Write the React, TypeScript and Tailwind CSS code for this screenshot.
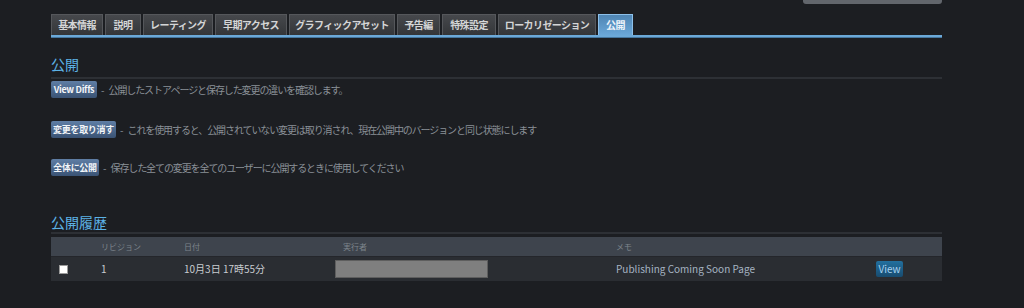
const tabs = [
  { label: "基本情報", w: "w-[52px]" },
  { label: "説明", w: "w-[36px]" },
  { label: "レーティング", w: "w-[70px]" },
  { label: "早期アクセス", w: "w-[72px]" },
  { label: "グラフィックアセット", w: "w-[106px]" },
  { label: "予告編", w: "w-[43px]" },
  { label: "特殊設定", w: "w-[54px]" },
  { label: "ローカリゼーション", w: "w-[98px]" },
];

const actions = [
  {
    label: "View Diffs",
    w: "w-[46px]",
    mt: "mt-[2px]",
    text: "公開したストアページと保存した変更の違いを確認します。",
  },
  {
    label: "変更を取り消す",
    w: "w-[65px]",
    mt: "mt-[23px]",
    text: "これを使用すると、公開されていない変更は取り消され、現在公開中のバージョンと同じ状態にします",
  },
  {
    label: "全体に公開",
    w: "w-[48px]",
    mt: "mt-[21px]",
    text: "保存した全ての変更を全てのユーザーに公開するときに使用してください",
  },
];

export default function App() {
  return (
    <div className="min-h-screen bg-[#1c1e22] font-['Noto_Sans_CJK_JP','Noto_Sans',sans-serif]">
      <div className="ml-[51px] w-[891px]">
        {/* top search box edge */}
        <div className="flex justify-end">
          <div className="h-[4px] w-[139px] rounded-b-[3px] bg-[#62666c]" />
        </div>

        {/* Tabs */}
        <div className="mt-[10px] flex gap-[2px]">
          {tabs.map((t) => (
            <div
              key={t.label}
              className={`${t.w} flex h-[21px] items-center justify-center whitespace-nowrap border border-b-0 border-[#55575b] bg-gradient-to-b from-[#46484c] to-[#343639] text-[10px] font-bold leading-none tracking-[-0.6px] text-[#d4d5d6]`}
            >
              {t.label}
            </div>
          ))}
          <div className="flex h-[21px] w-[35px] items-center justify-center border border-b-0 border-[#8cc0ea] bg-gradient-to-b from-[#4f85b3] to-[#6aa7d8] text-[10px] font-bold leading-none tracking-[-0.6px] text-[#eef4fa]">
            公開
          </div>
        </div>
        <div className="h-[2px] bg-[#6ca9d8]" />
        <div className="h-[1px] bg-[#46779f]" />

        {/* 公開 */}
        <h2 className="mt-[16px] h-[20px] text-[14px] leading-[20px] text-[#5cb2e6]">公開</h2>
        <div className="mt-[3px] h-[2px] bg-[#2d3035]" />

        {actions.map((a) => (
          <div key={a.label} className={`${a.mt} flex items-center`}>
            <div
              className={`${a.w} flex h-[17px] shrink-0 items-center justify-center whitespace-nowrap rounded-[2px] bg-gradient-to-b from-[#5f7ea5] to-[#3a5374] text-[9px] font-bold leading-none tracking-[-0.3px] text-[#f2f5f8]`}
            >
              {a.label}
            </div>
            <span className="ml-[4px] mr-[4px] text-[10px] leading-none text-[#8a9097]">-</span>
            <span className="whitespace-nowrap text-[10px] leading-none tracking-[-1.1px] text-[#8a9097]">
              {a.text}
            </span>
          </div>
        ))}

        {/* 公開履歴 */}
        <h2 className="mt-[36px] h-[20px] text-[14px] leading-[20px] text-[#5cb2e6]">公開履歴</h2>
        <div className="h-[2px] bg-[#2d3035]" />

        <div className="mt-[3px]">
          <div className="grid h-[19px] grid-cols-[50px_83px_151px_281px_260px_66px] items-center bg-[#3e444d] text-[8px] leading-none text-[#7d848c]">
            <div />
            <div>リビジョン</div>
            <div>日付</div>
            <div className="pl-[8px]">実行者</div>
            <div>メモ</div>
            <div />
          </div>
          <div className="grid h-[25px] grid-cols-[50px_83px_151px_281px_260px_66px] items-center border-t border-[#24262b] bg-[#2a2d32] text-[10px] leading-none">
            <div className="pl-[8px]">
              <div className="h-[9px] w-[9px] border border-[#9a9a9a] bg-white" />
            </div>
            <div className="text-[#c8ccd0]">1</div>
            <div className="text-[#c8ccd0]">10月3日 17時55分</div>
            <div>
              <div className="h-[18px] w-[153px] border border-[#5e5e5e] bg-[#7f7f7f]" />
            </div>
            <div className="text-[#a6b4c2]">Publishing Coming Soon Page</div>
            <div>
              <div className="flex h-[16px] w-[27px] items-center justify-center rounded-[2px] bg-gradient-to-b from-[#22709f] to-[#184c70] text-[10px] text-[#a9d4f2]">
                View
              </div>
            </div>
          </div>
        </div>
      </div>
    </div>
  );
}
